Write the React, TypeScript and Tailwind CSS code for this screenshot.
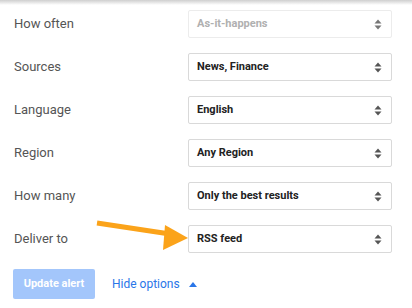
import React from 'react';

const rows = [
  { label: 'How often', value: 'As-it-happens', disabled: true },
  { label: 'Sources', value: 'News, Finance' },
  { label: 'Language', value: 'English' },
  { label: 'Region', value: 'Any Region' },
  { label: 'How many', value: 'Only the best results' },
  { label: 'Deliver to', value: 'RSS feed' },
];

const Spinner: React.FC<{ faded?: boolean }> = ({ faded }) => (
  <svg width="8" height="11" viewBox="0 0 8 11" className={faded ? 'opacity-80' : ''}>
    <path d="M4 0.5 L7.5 4.5 L0.5 4.5 Z" fill="#555" />
    <path d="M0.5 6.5 L7.5 6.5 L4 10.5 Z" fill="#555" />
  </svg>
);

const App: React.FC = () => {
  return (
    <div className="relative w-[412px] h-[308px] bg-white overflow-hidden font-['Roboto',sans-serif]">
      <div className="h-[5px] bg-gradient-to-b from-[#cfcfcf] to-white" />
      <div className="flex flex-col gap-[15px] pt-[5px] pl-[14px] pr-[20px]">
        {rows.map(r => (
          <div key={r.label} className="flex items-center justify-between h-[28px]">
            <span className="text-[13px] text-[#555]">{r.label}</span>
            <div
              className={`w-[204px] h-[28px] flex items-center justify-between pl-[8px] pr-[9px] rounded-[2px] border ${
                r.disabled ? 'border-[#ececec]' : 'border-[#d9d9d9]'
              }`}
            >
              <span className={`text-[11px] font-bold ${r.disabled ? 'text-[#b0b0b0]' : 'text-[#222]'}`}>
                {r.value}
              </span>
              <Spinner faded={r.disabled} />
            </div>
          </div>
        ))}
      </div>
      <div className="flex items-center gap-[17px] pl-[13px] mt-[16px]">
        <button className="w-[82px] h-[30px] rounded-[2px] bg-[#a3c6fb] text-white text-[11px] font-bold">
          Update alert
        </button>
        <span className="flex items-center gap-[9px] text-[12px] text-[#2a76e8]">
          Hide options
          <svg width="8" height="5" viewBox="0 0 8 5">
            <path d="M0 5 L4 0 L8 5 Z" fill="#2a76e8" />
          </svg>
        </span>
      </div>
      <svg className="absolute left-0 top-0 pointer-events-none" width="412" height="308">
        <line x1="97" y1="223" x2="170" y2="234" stroke="#fba31a" strokeWidth="5" />
        <path d="M165 225 L188 238 L163 250 Z" fill="#fba31a" />
      </svg>
    </div>
  );
};

export default App;
